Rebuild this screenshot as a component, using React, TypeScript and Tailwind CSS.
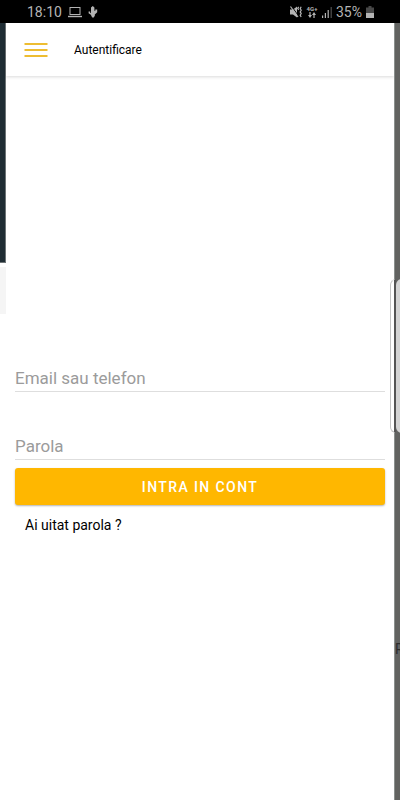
import { useState } from "react";

function StatusBar() {
  return (
    <div className="flex h-[23px] items-center justify-between bg-black pr-[26px] pl-[27px] text-[#b4b4b4]">
      <div className="flex items-center gap-1.5">
        <span className="text-sm">18:10</span>
        <svg className="h-3 w-3.5" viewBox="0 0 14 12" fill="none" stroke="currentColor">
          <rect x="2" y="1.5" width="10" height="7" />
          <path d="M0 10.5h14" strokeWidth="1.4" />
        </svg>
        <svg className="h-3 w-2.5" viewBox="0 0 10 12" fill="currentColor">
          <path d="M3 1.5L4.8 0l1.600 1.500v3.300l.9.2V3.600h1.900v2.600L6.800 8.600V10L5 12 3.200 10V9L.6 7.200V5.400h1.600v1.300l.8.500z" />
        </svg>
      </div>
      <div className="flex items-center gap-1">
        <svg className="h-3 w-3" viewBox="0 0 12 12" fill="none" stroke="currentColor">
          <path d="M0 3.500h3L7 .5v11L3 8.500H0z" fill="currentColor" stroke="none" />
          <path d="M1.500 0l7 10" stroke="#000" />
          <path d="M.5.5l7.500 10.500" strokeWidth="1.200" />
          <path d="M8.700.8L7.700 2.300l1 1.500M11.200.8l-1 1.700 1 1.700-1 1.700 1 1.700-1 1.700 1 1.700" strokeWidth="1.200" />
        </svg>
        <div className="flex w-3 flex-col items-center">
          <span className="text-[6px] leading-[6px] font-bold">4G+</span>
          <svg className="h-1.5 w-2" viewBox="0 0 8 6" fill="currentColor">
            <path d="M1.400 0h1.200v3H4L2 6 0 3h1.400zM5.400 6h1.200V3H8L6 0 4 3h1.400z" />
          </svg>
        </div>
        <svg className="h-3 w-2.5" viewBox="0 0 10 12" fill="currentColor">
          <path d="M0 9.500h1.200V12H0zM2.800 7h1.200v5H2.800zM5.600 4h1.200v8H5.600z" />
          <path d="M8.600 1h1.200v11H8.600z" opacity=".45" />
        </svg>
        <span className="text-sm">35%</span>
        <svg className="h-3 w-2" viewBox="0 0 8 12" fill="currentColor">
          <path d="M2.500 0h3v1.500H8V7H0V1.500h2.500z" opacity=".4" />
          <path d="M0 7h8v5H0z" />
        </svg>
      </div>
    </div>
  );
}

function Header() {
  return (
    <header className="flex h-[53px] items-center gap-[26px] bg-white px-[18px] shadow-[0_1px_3px_rgba(0,0,0,0.15)]">
      <button type="button" aria-label="Meniu" className="flex h-6 w-6 items-center justify-center">
        <svg className="h-4 w-6" viewBox="0 0 24 16" stroke="#edbd32" strokeWidth="2">
          <path d="M0.500 2h23M0.500 8h23M0.500 14h23" />
        </svg>
      </button>
      <h1 className="text-xs text-black">Autentificare</h1>
    </header>
  );
}

function LoginForm() {
  const [login, setLogin] = useState("");
  const [password, setPassword] = useState("");

  return (
    <form className="mt-[288px] flex flex-col px-[9px]" onSubmit={(e) => e.preventDefault()}>
      <input
        type="text"
        aria-label="Email sau telefon"
        placeholder="Email sau telefon"
        value={login}
        onChange={(e) => setLogin(e.target.value)}
        className="h-7 w-full border-b border-[#dedede] text-[17px] outline-none placeholder:text-[#9b9b9b]"
      />
      <input
        type="password"
        aria-label="Parola"
        placeholder="Parola"
        value={password}
        onChange={(e) => setPassword(e.target.value)}
        className="mt-10 h-7 w-full border-b border-[#dedede] text-[17px] outline-none placeholder:text-[#9b9b9b]"
      />
      <button
        type="submit"
        className="mt-2 h-[37px] w-full rounded-[3px] bg-[#ffb700] text-sm font-medium tracking-widest text-white uppercase shadow-[0_1px_2px_rgba(0,0,0,0.3)]"
      >
        Intra in cont
      </button>
      <a href="#" className="mt-2.5 self-start px-2.5 text-sm text-black">
        Ai uitat parola ?
      </a>
    </form>
  );
}

export default function App() {
  return (
    <div className="flex min-h-screen flex-col bg-white font-[Roboto,sans-serif]">
      <StatusBar />
      <div className="relative flex flex-1 overflow-hidden">
        {/* Previous page, peeking out on the left */}
        <div className="w-1.5 shrink-0">
          <div className="h-60 border-r border-b border-[#6d7476] bg-[#1f2d34]" />
          <div className="mt-1 h-[47px] bg-[#f5f5f5]" />
        </div>

        <main className="min-w-0 flex-1 bg-white">
          <Header />
          <LoginForm />
        </main>

        {/* Dimmed page on the right */}
        <div className="w-1.5 shrink-0 overflow-hidden border-l border-[#8b908e] bg-[#626361] pt-[618px]">
          <span className="block text-sm leading-4 text-[#2c2c2c]">R</span>
        </div>

        {/* Edge panel handle */}
        <div className="absolute top-64 right-[4px] h-[154px] w-[6px] rounded-l-md border border-r-2 border-[#c4c4c4] border-r-[#555555] bg-white" />
        <div className="absolute top-64 -right-1 h-[154px] w-2 rounded-l-md bg-[#d4d4d4]" />
      </div>
    </div>
  );
}
